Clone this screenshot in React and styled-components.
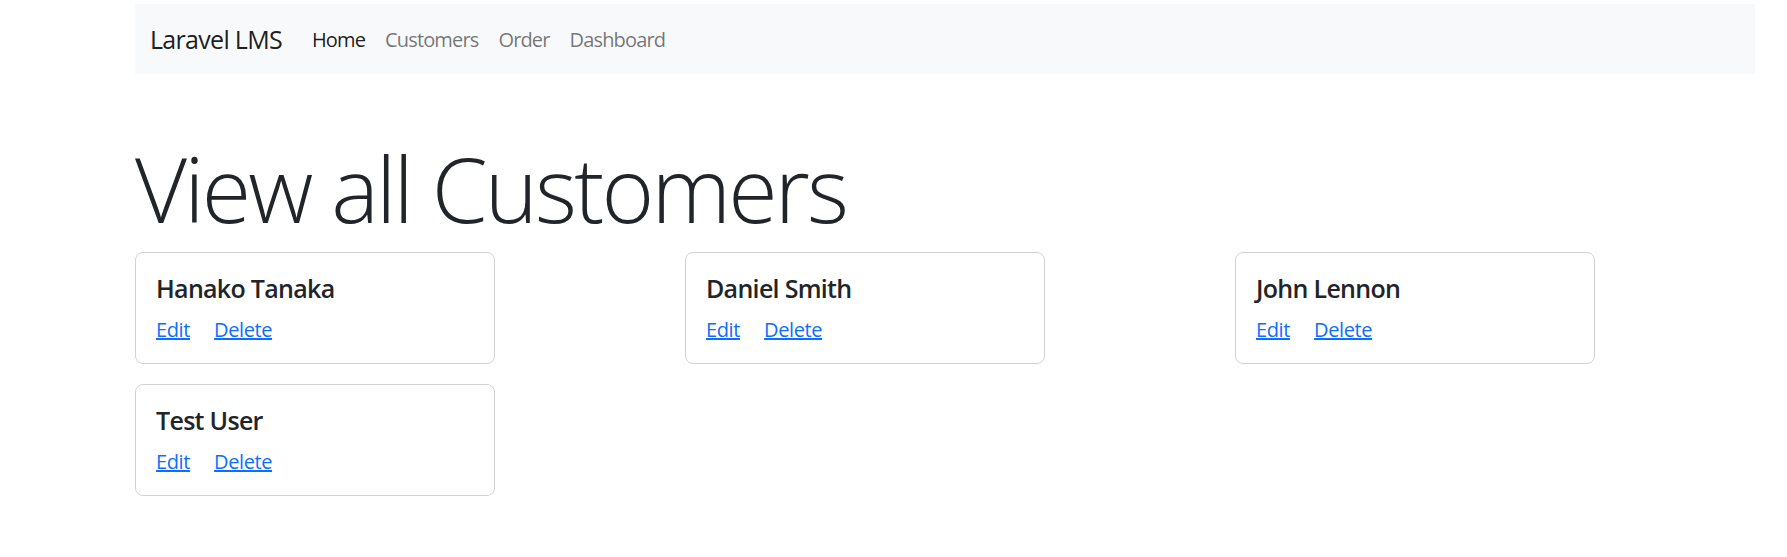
import React from 'react';
import styled, { createGlobalStyle } from 'styled-components';

const GlobalStyle = createGlobalStyle`
    body {
        margin: 0;
        background: #ffffff;
        color: #212529;
        font-family: "Open Sans", "Noto Sans", "Liberation Sans", sans-serif;
    }
`;

const Container = styled.div`
    box-sizing: border-box;
    width: 1650px;
    margin-left: 120px;
    padding: 4px 15px 0;
`;

const Navbar = styled.nav`
    display: flex;
    align-items: center;
    height: 70px;
    padding: 1px 15px 0;
    box-sizing: border-box;
    background: #f8f9fa;
`;

const Brand = styled.a`
    margin-right: 20px;
    font-size: 25px;
    line-height: 1.5;
    letter-spacing: -0.7px;
    color: rgba(0, 0, 0, 0.9);
    text-decoration: none;
`;

const NavList = styled.ul`
    display: flex;
    margin: 0;
    padding: 0;
    list-style: none;
`;

const NavLink = styled.a`
    display: block;
    padding: 10px;
    font-size: 20px;
    line-height: 1.5;
    letter-spacing: -0.85px;
    color: ${({ $active }) => ($active ? 'rgba(0, 0, 0, 0.9)' : 'rgba(0, 0, 0, 0.55)')};
    text-decoration: none;
`;

const Title = styled.h1`
    margin: 60px 0 10px;
    font-size: 90px;
    font-weight: 300;
    line-height: 108px;
    letter-spacing: -2.8px;
`;

const CardGrid = styled.div`
    display: grid;
    grid-template-columns: repeat(3, 550px);
    row-gap: 20px;
    margin: 0 -15px;
`;

const Col = styled.div`
    padding: 0 15px;
`;

const Card = styled.div`
    box-sizing: border-box;
    width: 360px;
    padding: 20px;
    border: 1px solid rgba(0, 0, 0, 0.175);
    border-radius: 8px;
`;

const CardTitle = styled.h5`
    margin: 0 0 10px;
    font-size: 25px;
    font-weight: 600;
    line-height: 30px;
    letter-spacing: -0.7px;
`;

const CardLinks = styled.div`
    padding-top: 2px;
    margin-bottom: -2px;
`;

const CardLink = styled.a`
    font-size: 20px;
    line-height: 30px;
    letter-spacing: -0.4px;
    color: #0d6efd;
    text-decoration: underline;
    & + & {
        margin-left: 20px;
    }
`;

const customers = ['Hanako Tanaka', 'Daniel Smith', 'John Lennon', 'Test User'];

const App = () => {
    return (
        <>
            <GlobalStyle />
            <Container>
                <Navbar>
                    <Brand href="#">Laravel LMS</Brand>
                    <NavList>
                        <li><NavLink href="#" $active>Home</NavLink></li>
                        <li><NavLink href="#">Customers</NavLink></li>
                        <li><NavLink href="#">Order</NavLink></li>
                        <li><NavLink href="#">Dashboard</NavLink></li>
                    </NavList>
                </Navbar>
                <Title>View all Customers</Title>
                <CardGrid>
                    {customers.map((name) => (
                        <Col key={name}>
                            <Card>
                                <CardTitle>{name}</CardTitle>
                                <CardLinks>
                                    <CardLink href="#">Edit</CardLink>{' '}
                                    <CardLink href="#">Delete</CardLink>
                                </CardLinks>
                            </Card>
                        </Col>
                    ))}
                </CardGrid>
            </Container>
        </>
    );
};

export default App;
